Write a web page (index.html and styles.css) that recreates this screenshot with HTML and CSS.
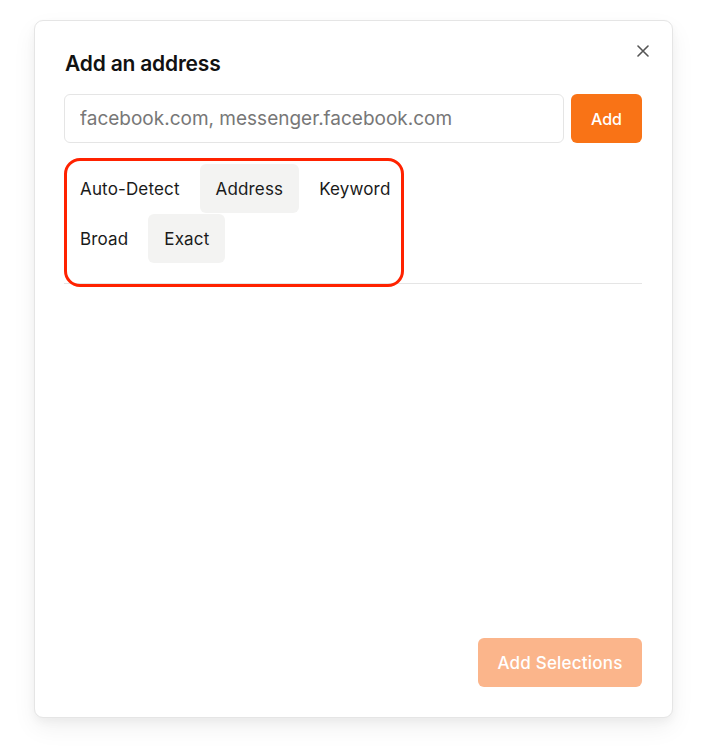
FILE: index.html
```html
<!DOCTYPE html>
<html lang="en">
<head>
<meta charset="utf-8">
<title>Add an address</title>
<link rel="stylesheet" href="styles.css">
</head>
<body>
<div class="backdrop">
  <div class="modal" role="dialog" aria-labelledby="title">
    <button class="close" aria-label="Close">
      <svg width="12" height="12" viewBox="0 0 12 12"><path d="M1 1L11 11M11 1L1 11" stroke="#555" stroke-width="1.6" stroke-linecap="round"/></svg>
    </button>
    <h2 class="title" id="title">Add an address</h2>
    <div class="entry">
      <input class="field" type="text" placeholder="facebook.com, messenger.facebook.com">
      <button class="btn-add">Add</button>
    </div>
    <div class="options">
      <div class="tags">
        <span class="tag">Auto-Detect</span>
        <span class="tag active">Address</span>
        <span class="tag">Keyword</span>
        <span class="tag">Broad</span>
        <span class="tag active">Exact</span>
      </div>
      <div class="highlight"></div>
    </div>
    <div class="divider"></div>
    <div class="footer">
      <button class="btn-submit" disabled>Add Selections</button>
    </div>
  </div>
</div>
</body>
</html>
```
FILE: styles.css
```css
* { box-sizing: border-box; }
html, body { margin: 0; padding: 0; }
body {
  background: #ffffff;
  font-family: Inter, "Noto Sans", "Liberation Sans", sans-serif;
  color: #171717;
  width: 719px;
  height: 753px;
  overflow: hidden;
}
.backdrop {
  padding: 20px 0 0 34px;
}
.modal {
  position: relative;
  width: 639px;
  height: 698px;
  background: #fff;
  border: 1px solid #e5e5e5;
  border-radius: 9px;
  box-shadow: 0 10px 25px rgba(0,0,0,0.06), 0 4px 8px rgba(0,0,0,0.04);
  padding: 29px 30px 30px 29px;
  display: flex;
  flex-direction: column;
}
.close {
  position: absolute;
  top: 24px;
  right: 23px;
  width: 12px;
  height: 12px;
  padding: 0;
  border: 0;
  background: none;
  display: flex;
}
.title {
  margin: 0 0 0 1px;
  font-size: 21px;
  line-height: 28px;
  font-weight: 600;
  color: #111;
  letter-spacing: -0.2px;
}
.entry {
  display: flex;
  gap: 7px;
  margin-top: 16px;
}
.field {
  flex: 1;
  height: 49px;
  border: 1px solid #e5e5e5;
  border-radius: 6px;
  padding: 0 15px;
  font-family: inherit;
  font-size: 19px;
  color: #222;
  outline: none;
}
.field::placeholder { color: #777; }
.btn-add {
  width: 71px;
  height: 49px;
  border: 0;
  border-radius: 6px;
  background: #f97316;
  color: #fff;
  font-family: inherit;
  font-size: 16px;
  font-weight: 500;
}
.options {
  position: relative;
  margin-top: 21px;
}
.tags {
  display: flex;
  flex-wrap: wrap;
  gap: 1px 4px;
  width: 360px;
}
.tag {
  height: 49px;
  display: inline-flex;
  align-items: center;
  padding: 0 16px;
  border-radius: 6px;
  font-size: 17px;
  letter-spacing: 0.15px;
  color: #1a1a1a;
}
.tag.active { background: #f3f3f2; }
.highlight {
  position: absolute;
  left: 0;
  top: -6px;
  width: 340px;
  height: 129px;
  border: 3px solid #ff2200;
  border-radius: 16px;
  pointer-events: none;
}
.divider {
  height: 1px;
  background: #e5e5e5;
  margin-top: 20px;
}
.footer {
  margin-top: auto;
  display: flex;
  justify-content: flex-end;
}
.btn-submit {
  width: 164px;
  height: 49px;
  border: 0;
  border-radius: 6px;
  background: #fbb58b;
  color: #fff;
  font-family: inherit;
  font-size: 17px;
  font-weight: 500;
  letter-spacing: 0.2px;
}
```
